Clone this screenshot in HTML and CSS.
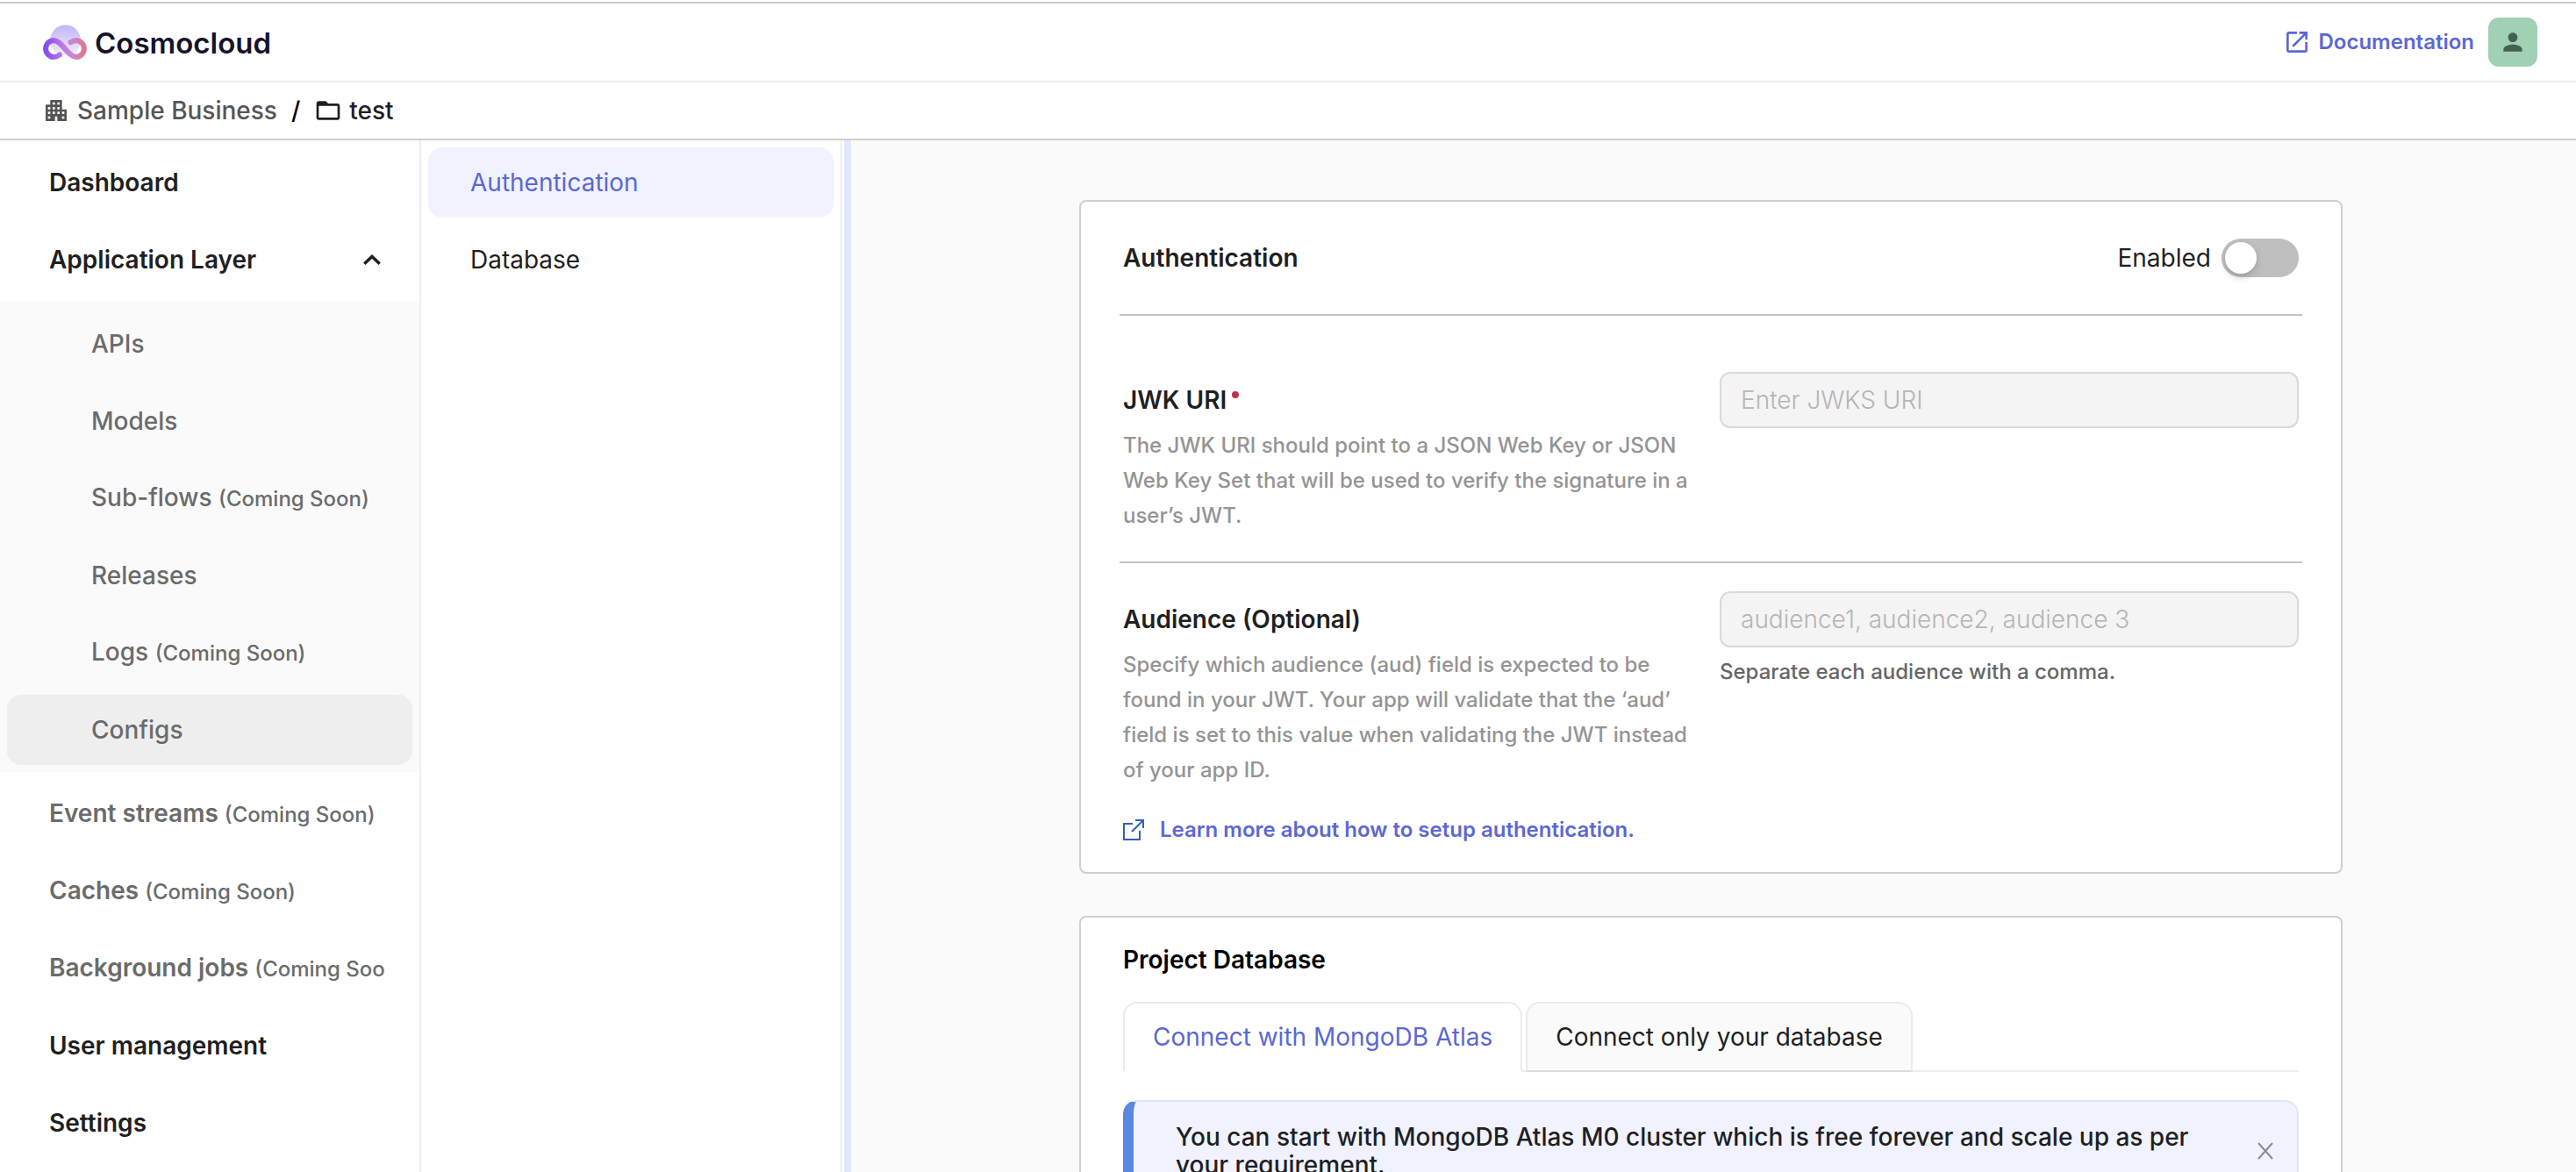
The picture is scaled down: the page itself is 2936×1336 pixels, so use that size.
FILE: index.html
```html
<!DOCTYPE html>
<html lang="en">
<head>
<meta charset="utf-8">
<title>Cosmocloud – Configs</title>
<link rel="stylesheet" href="styles.css">
</head>
<body>
<header class="topbar">
  <a class="brand" href="#">
    <svg class="brand-mark" viewBox="0 0 52 40" aria-hidden="true">
      <defs>
        <linearGradient id="puff" x1="0" y1="0" x2="0" y2="1"><stop offset="0" stop-color="#c3b3f8"/><stop offset="1" stop-color="#f0ecfd"/></linearGradient>
        <linearGradient id="loop" gradientUnits="userSpaceOnUse" x1="0" y1="28" x2="52" y2="28"><stop offset="0" stop-color="#7a45f5"/><stop offset=".45" stop-color="#bb7ae0"/><stop offset=".65" stop-color="#cb86cf"/><stop offset="1" stop-color="#e57383"/></linearGradient>
      </defs>
      <path d="M9 18a17.500 17.500 0 0 1 35 0c0 8-6 17-17.500 17S9 26 9 18z" fill="url(#puff)"/>
      <path d="M20 34.500C17.800 36.200 15.500 37 12.800 37A9.600 9.600 0 0 1 12.800 17.900C23 17.900 29 37 39.200 37A9.600 9.600 0 0 0 39.200 17.900C36.500 17.900 34.600 18.700 32.500 20.200" fill="none" stroke="url(#loop)" stroke-width="6" stroke-linecap="round"/>
    </svg>
    <span class="brand-name">Cosmocloud</span>
  </a>
  <div class="topbar-actions">
    <a class="doc-link" href="#">
      <svg class="icon" viewBox="0 0 24 24" aria-hidden="true"><path d="M19 19H5V5h7V3H5c-1.110 0-2 .9-2 2v14c0 1.100.89 2 2 2h14c1.100 0 2-.9 2-2v-7h-2v7zM14 3v2h3.590l-9.830 9.830 1.410 1.410L19 6.410V10h2V3h-7z"/></svg>
      Documentation
    </a>
    <button class="avatar" type="button" aria-label="Account">
      <svg class="icon" viewBox="0 0 24 24" aria-hidden="true"><path d="M12 12c2.210 0 4-1.790 4-4s-1.790-4-4-4-4 1.790-4 4 1.790 4 4 4zm0 2c-2.670 0-8 1.340-8 4v2h16v-2c0-2.660-5.330-4-8-4z"/></svg>
    </button>
  </div>
</header>

<nav class="breadcrumb" aria-label="Breadcrumb">
  <a class="crumb" href="#">
    <svg class="icon" viewBox="0 0 24 24" aria-hidden="true"><path d="M17 11V3H7v4H3v14h8v-4h2v4h8V11h-4zM7 19H5v-2h2v2zm0-4H5v-2h2v2zm0-4H5V9h2v2zm4 4H9v-2h2v2zm0-4H9V9h2v2zm0-4H9V5h2v2zm4 8h-2v-2h2v2zm0-4h-2V9h2v2zm0-4h-2V5h2v2zm4 12h-2v-2h2v2zm0-4h-2v-2h2v2z"/></svg>
    Sample Business
  </a>
  <span class="crumb-sep">/</span>
  <a class="crumb crumb-current" href="#">
    <svg class="icon" viewBox="0 0 24 24" aria-hidden="true"><path d="M20 6h-8l-2-2H4c-1.100 0-1.990.9-1.990 2L2 18c0 1.100.9 2 2 2h16c1.100 0 2-.9 2-2V8c0-1.100-.9-2-2-2zm0 12H4V8h16v10z"/></svg>
    test
  </a>
</nav>

<div class="workspace">
  <nav class="sidebar" aria-label="Project">
    <div class="group">
      <a class="item item-main" href="#">Dashboard</a>
      <button class="item item-main" type="button" aria-expanded="true">Application Layer
        <svg class="chevron" viewBox="0 0 24 24" aria-hidden="true"><path d="M4.500 16L12 9L19.500 16"/></svg>
      </button>
    </div>
    <div class="group group-sub">
      <a class="item item-sub" href="#">APIs</a>
      <a class="item item-sub" href="#">Models</a>
      <a class="item item-sub" href="#"><span class="clip">Sub-flows <small class="soon">(Coming Soon)</small></span></a>
      <a class="item item-sub" href="#">Releases</a>
      <a class="item item-sub" href="#"><span class="clip">Logs <small class="soon">(Coming Soon)</small></span></a>
      <a class="item item-sub item-active" href="#">Configs</a>
    </div>
    <div class="group">
      <a class="item item-main item-off" href="#"><span class="clip">Event streams <small class="soon">(Coming Soon)</small></span></a>
      <a class="item item-main item-off" href="#"><span class="clip">Caches <small class="soon">(Coming Soon)</small></span></a>
      <a class="item item-main item-off" href="#"><span class="clip">Background jobs <small class="soon">(Coming Soon)</small></span></a>
      <a class="item item-main" href="#">User management</a>
      <a class="item item-main" href="#">Settings</a>
    </div>
  </nav>

  <nav class="subnav" aria-label="Configs">
    <div class="group">
      <a class="item item-page item-selected" href="#">Authentication</a>
      <a class="item item-page" href="#">Database</a>
    </div>
  </nav>
  <div class="resizer"></div>

  <main class="content">
    <section class="card">
      <div class="card-head">
        <h2 class="title">Authentication</h2>
        <label class="toggle">Enabled <input class="switch" type="checkbox" role="switch"></label>
      </div>
      <hr class="rule">
      <div class="field field-first">
        <div>
          <label class="label" for="jwk">JWK URI <span class="required"></span></label>
          <p class="hint">The JWK URI should point to a JSON Web Key or JSON Web Key Set that will be used to verify the signature in a user’s JWT.</p>
        </div>
        <div><input class="input" id="jwk" type="text" placeholder="Enter JWKS URI" disabled></div>
      </div>
      <hr class="rule">
      <div class="field">
        <div>
          <label class="label" for="aud">Audience (Optional)</label>
          <p class="hint">Specify which audience (aud) field is expected to be found in your JWT. Your app will validate that the ‘aud’ field is set to this value when validating the JWT instead of your app ID.</p>
        </div>
        <div>
          <input class="input" id="aud" type="text" placeholder="audience1, audience2, audience 3" disabled>
          <p class="help">Separate each audience with a comma.</p>
        </div>
      </div>
      <a class="learn" href="#">
        <svg class="learn-icon" viewBox="0 0 24 24" aria-hidden="true"><path d="M11 5H1v18h18V13M14 1h9v9M10 14L23 1"/></svg>
        Learn more about how to setup authentication.
      </a>
    </section>

    <section class="card">
      <h2 class="title title-db">Project Database</h2>
      <div class="tabs" role="tablist">
        <button class="tab tab-on" type="button" role="tab" aria-selected="true">Connect with MongoDB Atlas</button>
        <button class="tab" type="button" role="tab" aria-selected="false">Connect only your database</button>
      </div>
      <div class="notice">
        <p class="notice-text">You can start with MongoDB Atlas M0 cluster which is free forever and scale up as per your requirement.</p>
        <button class="close" type="button" aria-label="Dismiss">
          <svg class="close-icon" viewBox="0 0 24 24" aria-hidden="true"><path d="M4 3L20 21M20 3L4 21"/></svg>
        </button>
      </div>
    </section>
  </main>
</div>
</body>
</html>
```

FILE: styles.css
```css
* { box-sizing: border-box; }

body {
  margin: 0;
  height: 100vh;
  overflow: hidden;
  display: flex;
  flex-direction: column;
  padding-top: 2px;
  background: #fff;
  color: #1f1f1f;
  font-family: Inter, "Liberation Sans", sans-serif;
  font-size: 28px;
  line-height: 40px;
  font-optical-sizing: none;
}

a { color: inherit; text-decoration: none; }
p, h2 { margin: 0; }
button, input { font: inherit; color: inherit; font-optical-sizing: none; }
button { cursor: pointer; }

.icon { width: 32px; height: 32px; fill: currentColor; flex: none; }

.topbar {
  flex: none;
  display: flex;
  align-items: center;
  justify-content: space-between;
  height: 92px;
  padding: 0 44px 0 48px;
  border-top: 2px solid #cacaca;
  border-bottom: 2px solid #eee;
}
.brand { display: flex; align-items: center; gap: 8px; }
.brand-mark { width: 52px; height: 40px; }
.brand-name { padding-top: 2px; font-size: 33px; font-weight: 600; color: #17132a; }
.topbar-actions { display: flex; align-items: center; gap: 16px; }
.doc-link {
  display: flex;
  align-items: center;
  gap: 8px;
  font-size: 24px;
  font-weight: 600;
  color: #5b68d3;
}
.avatar {
  display: flex;
  align-items: center;
  justify-content: center;
  width: 56px;
  height: 56px;
  padding: 0;
  border: 0;
  border-radius: 12px;
  background: #a1d0b4;
  color: #426250;
}

.breadcrumb {
  flex: none;
  display: flex;
  align-items: center;
  gap: 16px;
  height: 66px;
  padding: 0 48px;
  border-bottom: 2px solid #d0d0cb;
  font-weight: 500;
}
.crumb { display: flex; align-items: center; gap: 8px; color: #555; }
.crumb-sep { color: #000; }
.crumb-current { color: #1f1f1f; }

.workspace { flex: 1; min-height: 0; display: flex; }
.sidebar, .subnav {
  flex: none;
  width: 480px;
  overflow: hidden;
  border-right: 2px solid #eee;
}
.resizer {
  flex: none;
  width: 10px;
  border-left: 2px solid #fff;
  background: #e2e7fb;
}

.group { display: flex; flex-direction: column; gap: 8px; padding: 8px; }
.group-sub { background: #fafafa; }
.item {
  display: flex;
  align-items: center;
  justify-content: space-between;
  height: 80px;
  padding: 0 32px 0 48px;
  border: 0;
  border-radius: 16px;
  background: none;
  text-align: left;
  white-space: nowrap;
}
.item-main { font-weight: 600; }
.item-off { color: #6b6b6b; }
.item-sub { padding-left: 96px; font-weight: 500; color: #6b6b6b; }
.item-active { background: #eee; }
.item-selected { background: #f0f2ff; color: #5b68d3; }
.clip { overflow: hidden; }
.soon { font-size: 24px; font-weight: 500; }
.chevron { width: 28px; height: 28px; fill: none; stroke: currentColor; stroke-width: 3; }

.content {
  flex: 1;
  min-width: 0;
  overflow: hidden;
  display: flex;
  flex-direction: column;
  align-items: center;
  gap: 48px;
  padding: 68px 6px 48px 0;
  background: #fafafa;
}
.card {
  flex: none;
  width: 100%;
  max-width: 1440px;
  padding: 0 48px;
  border: 2px solid #d0d0cb;
  border-radius: 8px;
  background: #fff;
}
.title { font-size: 28px; font-weight: 600; }
.card-head {
  display: flex;
  align-items: center;
  justify-content: space-between;
  height: 128px;
}
.toggle { display: flex; align-items: center; gap: 12px; }
.switch {
  appearance: none;
  display: flex;
  width: 88px;
  height: 44px;
  margin: 0;
  padding: 4px;
  border-radius: 22px;
  background: #bfbfbf;
}
.switch::before {
  content: "";
  width: 36px;
  height: 36px;
  border-radius: 50%;
  background: #fff;
  box-shadow: 0 4px 8px rgba(0, 35, 11, 0.2);
}
.rule { margin: 0 -4px; border: 0; border-top: 2px solid #c4c4c2; }

.field {
  display: grid;
  grid-template-columns: 1fr 1fr;
  gap: 20px;
  padding: 32px 0 16px;
}
.field-first { padding: 64px 0 32px; }
.label { display: flex; gap: 6px; line-height: 64px; font-weight: 600; }
.required {
  width: 8px;
  height: 8px;
  margin-top: 22px;
  border-radius: 50%;
  background: #c0304c;
}
.hint { font-size: 24px; font-weight: 500; color: #949494; }
.input {
  display: block;
  width: 100%;
  height: 64px;
  padding: 0 22px;
  border: 2px solid #d9d9d9;
  border-radius: 12px;
  background: #f4f4f4;
}
.input::placeholder { color: #b5b5b5; font-weight: 300; opacity: 1; }
.help { margin-top: 8px; font-size: 24px; font-weight: 500; color: #666; }
.learn {
  display: inline-flex;
  align-items: center;
  gap: 18px;
  height: 64px;
  margin-bottom: 16px;
  font-size: 24px;
  font-weight: 600;
  color: #5b68d3;
}
.learn-icon { width: 24px; height: 24px; fill: none; stroke: #2f62bb; stroke-width: 2; }

.title-db { line-height: 96px; color: #000; }
.tabs { display: flex; gap: 4px; border-bottom: 2px solid #eee; }
.tab {
  height: 80px;
  margin-bottom: -2px;
  padding: 0 32px;
  border: 2px solid #ebebeb;
  border-bottom-color: #dcdcdc;
  border-radius: 16px 16px 0 0;
  background: #fafafa;
}
.tab-on { background: #fff; border-bottom-color: #fff; color: #5b68d3; }
.notice {
  display: flex;
  align-items: center;
  gap: 64px;
  margin: 32px 0 48px;
  padding: 24px 24px 24px 48px;
  border: 2px solid #e0e6fa;
  border-left: 12px solid #5a88de;
  border-radius: 16px;
  background: #f0f2ff;
}
.notice-text { flex: 1; line-height: 32px; font-weight: 500; }
.close { display: flex; padding: 0; border: 0; background: none; color: #8a8a90; }
.close-icon { width: 24px; height: 24px; fill: none; stroke: currentColor; stroke-width: 2; }
```
